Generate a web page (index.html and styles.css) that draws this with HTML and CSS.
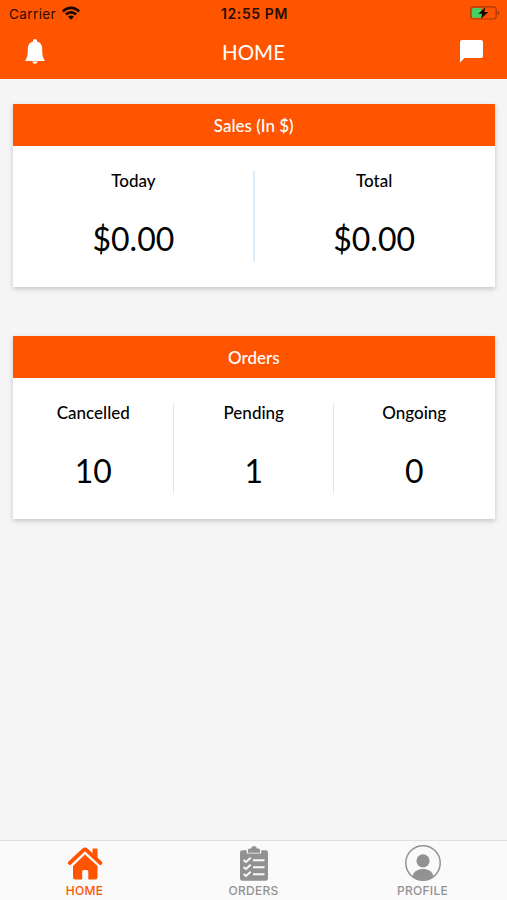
FILE: index.html
```html
<!DOCTYPE html>
<html lang="en">
<head>
    <meta charset="UTF-8">
    <meta name="viewport" content="width=device-width, initial-scale=1.0">
    <title>Home</title>
    <link rel="stylesheet" href="styles.css">
</head>
<body>
    <header class="header">
        <div class="status-bar">
            <div class="carrier">
                <span>Carrier</span>
                <svg class="wifi" viewBox="0 0 18 14">
                    <path d="M0 4.5C5-1 13-1 18 4.5L16.2 6.4C12.2 2.3 5.8 2.3 1.8 6.4Z"/>
                    <path d="M3 7.6C6.4 4.1 11.6 4.1 15 7.6L13.2 9.4C10.8 7.1 7.2 7.1 4.8 9.4Z"/>
                    <path d="M6 10.7C7.7 9.1 10.3 9.1 12 10.7L9 13.8Z"/>
                </svg>
            </div>
            <span class="time">12:55 PM</span>
            <svg class="battery" viewBox="0 0 30 14">
                <rect x=".8" y=".8" width="25.4" height="12.2" rx="2.8" fill="none" stroke="#a53a08" stroke-width="1.2"/>
                <path d="M27.5 4.7C30 5.4 30 8.4 27.5 9.1Z" fill="#a53a08"/>
                <rect x="2" y="2" width="9.5" height="9.8" rx="1.5" fill="#45d060"/>
                <path d="M15.5 1.2L8.3 7.7H12.2L11 12.8L18.3 6.1H14.2Z" fill="#160800"/>
            </svg>
        </div>
        <div class="nav-bar">
            <svg class="bell" viewBox="0 0 20 25">
                <path d="M10 0C8.8 0 8 .8 8 2V2.6C4.4 3.5 2.8 6.5 2.8 10C2.8 16 2.3 18.7 0 22H20C17.7 18.7 17.2 16 17.2 10C17.2 6.5 15.6 3.5 12 2.6V2C12 .8 11.2 0 10 0Z"/>
                <path d="M7.3 22.5H12.7C12.3 24 11.3 24.7 10 24.7S7.7 24 7.3 22.5Z"/>
            </svg>
            <h1>HOME</h1>
            <svg class="chat" viewBox="0 0 23 23">
                <path d="M2 0H21Q23 0 23 2V16Q23 18 21 18H4.5L0 22.5V2Q0 0 2 0Z"/>
            </svg>
        </div>
    </header>

    <main class="content">
        <section class="card">
            <h2>Sales (In $)</h2>
            <div class="stats">
                <div class="stat">
                    <span class="label">Today</span>
                    <span class="value">$0.00</span>
                </div>
                <div class="stat wide-line">
                    <span class="label">Total</span>
                    <span class="value">$0.00</span>
                </div>
            </div>
        </section>

        <section class="card">
            <h2>Orders</h2>
            <div class="stats">
                <div class="stat">
                    <span class="label">Cancelled</span>
                    <span class="value">10</span>
                </div>
                <div class="stat">
                    <span class="label">Pending</span>
                    <span class="value">1</span>
                </div>
                <div class="stat">
                    <span class="label">Ongoing</span>
                    <span class="value">0</span>
                </div>
            </div>
        </section>
    </main>

    <nav class="tab-bar">
        <a class="tab active">
            <svg viewBox="0 0 36 36">
                <path d="M18 9.4L30.5 21V32Q30.5 34.5 28 34.5H21.3V26.5Q21.3 25 19.8 25H16.7Q15.2 25 15.2 26.5V34.5H8.5Q6 34.5 6 32V21Z" fill="currentColor"/>
                <path d="M2.8 18L16.5 5.1Q18 3.8 19.5 5.1L33.4 18" fill="none" stroke="currentColor" stroke-width="3.8" stroke-linecap="round"/>
                <path d="M25.5 4.5Q25.5 3.5 26.5 3.5H29.5Q30.5 3.5 30.5 4.5V15L25.5 10Z" fill="currentColor"/>
                <path d="M4.5 20.2L18 7.8L31.7 20.2" fill="none" stroke="#fafafa" stroke-width=".9"/>
            </svg>
            <span>HOME</span>
        </a>
        <a class="tab">
            <svg viewBox="0 0 36 36">
                <path d="M6.5 5.2H10.8V8.6H25.2V5.2H29.5Q32 5.2 32 7.7V33.2Q32 35.7 29.5 35.7H6.5Q4 35.7 4 33.2V7.7Q4 5.2 6.5 5.2Z" fill="currentColor"/>
                <path d="M12 7.7V5Q12 3.5 13.5 3.5H15.2C15.2 0 20.8 0 20.8 3.5H22.5Q24 3.5 24 5V7.7Z" fill="currentColor"/>
                <g fill="none" stroke="#fafafa" stroke-width="2">
                    <path d="M7.6 15L10 17L14.7 12.8M7.6 22L10 24L14.7 19.8M7.6 29L10 31L14.7 26.8"/>
                    <path d="M17 15.3H28.5M17 22.3H28.5M17 29.3H28.5"/>
                </g>
            </svg>
            <span>ORDERS</span>
        </a>
        <a class="tab">
            <svg viewBox="0 0 36 36">
                <clipPath id="avatar"><circle cx="18" cy="18" r="17"/></clipPath>
                <circle cx="18" cy="18" r="17.2" fill="none" stroke="currentColor" stroke-width="1.5"/>
                <circle cx="18" cy="15.8" r="6.6" fill="currentColor"/>
                <path d="M7.5 36V31C9 26 13 24 18 24S27 26 28.5 31V36Z" fill="currentColor" clip-path="url(#avatar)"/>
            </svg>
            <span>PROFILE</span>
        </a>
    </nav>
</body>
</html>
```

FILE: styles.css
```css
* {
    box-sizing: border-box;
}
body {
    margin: 0;
    height: 100vh;
    display: flex;
    flex-direction: column;
    background: #f5f5f5;
    font-family: Lato, sans-serif;
    color: #000;
}
h1, h2 {
    margin: 0;
    font-weight: normal;
}
.header {
    height: 79px;
    background: #ff5500;
}
.status-bar {
    display: grid;
    grid-template-columns: 1fr auto 1fr;
    align-items: center;
    height: 27px;
    padding: 0 7px 0 9px;
    font-family: Inter, sans-serif;
    font-size: 13.5px;
    color: #2a0d00;
}
.carrier {
    display: flex;
    align-items: center;
    gap: 6px;
    letter-spacing: 0.4px;
}
.wifi {
    width: 18px;
    height: 14px;
    margin-top: -2px;
    fill: #160800;
}
.time {
    font-size: 14px;
    font-weight: 600;
    letter-spacing: 0.6px;
}
.battery {
    width: 30px;
    height: 14px;
    margin-top: -1px;
    justify-self: end;
}
.nav-bar {
    display: flex;
    justify-content: space-between;
    align-items: center;
    height: 49px;
    padding: 0 24px 0 25px;
    color: #fff;
}
.nav-bar h1 {
    margin-left: 2px;
    font-size: 20.5px;
}
.bell {
    width: 20px;
    height: 25px;
    fill: #fff;
}
.chat {
    width: 23px;
    height: 23px;
    fill: #fff;
}
.content {
    flex: 1;
    display: flex;
    flex-direction: column;
    gap: 49px;
    padding: 25px 12.5px 0 13px;
}
.card {
    height: 183px;
    background: #fff;
    box-shadow: 0 2px 5px rgba(0, 0, 0, 0.2);
}
.card h2 {
    height: 42px;
    background: #ff5500;
    color: #fff;
    font-size: 17px;
    font-weight: 500;
    line-height: 43px;
    text-align: center;
}
.stats {
    display: flex;
    padding: 25px 0;
}
.stat {
    flex: 1;
    height: 91px;
    display: flex;
    flex-direction: column;
    align-items: center;
    gap: 28px;
}
.stat + .stat {
    box-shadow: -1px 0 #d3edfa;
}
.stat.wide-line {
    background: linear-gradient(to right, #deedfa 1px, transparent 1px);
    box-shadow: -1px 0 #deedfa;
}
.label {
    font-size: 17px;
    line-height: 20px;
    font-weight: 500;
}
.value {
    font-size: 32px;
    line-height: 40px;
}
.tab-bar {
    display: flex;
    height: 60px;
    border-top: 1px solid #dedede;
    background: #fafafa;
}
.tab {
    flex: 1;
    display: flex;
    flex-direction: column;
    align-items: center;
    padding-top: 4px;
    color: #929292;
    font-family: Inter, sans-serif;
    font-size: 12px;
    font-weight: 500;
    line-height: 14px;
    letter-spacing: 0.3px;
}
.tab svg {
    width: 36px;
    height: 36px;
    margin-bottom: 3px;
}
.tab.active {
    color: #ff5500;
}
```
